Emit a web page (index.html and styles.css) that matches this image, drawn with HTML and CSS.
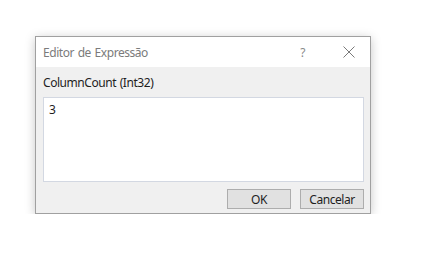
FILE: index.html
```html
<!DOCTYPE html>
<html lang="pt">
<head>
<meta charset="UTF-8">
<title>Editor de Expressão</title>
<link rel="stylesheet" href="styles.css">
</head>
<body>

<!-- ─── DIALOG ──────────────────────────────────────────────────────────── -->
<div class="dialog">
  <div class="titlebar">
    <span class="title">Editor de Expressão</span>
    <span class="help">?</span>
    <svg class="close" width="12" height="12" viewBox="0 0 12 12">
      <path d="M0.5 0.5 L11.5 11.5 M11.5 0.5 L0.5 11.5" stroke="#7a7a7a" stroke-width="1" fill="none"/>
    </svg>
  </div>

  <div class="content">
    <div class="label">ColumnCount (Int32)</div>
    <div class="editor">3</div>
    <div class="buttons">
      <button class="btn">OK</button>
      <button class="btn">Cancelar</button>
    </div>
  </div>
</div>

</body>
</html>
```

FILE: styles.css
```css
*{ box-sizing:border-box; }

body{
  margin:0;
  background:#fff;
  font-family:"Noto Sans", "Open Sans", sans-serif;
  font-size:12px;
  letter-spacing:-0.45px;
  word-spacing:1px;
  color:#1e1e1e;
}

/* the dialog window */
.dialog{
  width:336px;
  height:178px;
  margin:36px 0 0 35px;
  border:1px solid #a0a0a0;
  background:#f0f0f0;
  box-shadow:0 2px 10px rgba(0,0,0,.22);
  display:flex;
  flex-direction:column;
}

.titlebar{
  height:30px;
  background:#fff;
  display:flex;
  align-items:center;
  padding:0 15px 0 7px;
}
.title{
  flex:1;
  color:#7b7b7b;
}
.help{
  color:#8a8a8a;
  margin-right:38px;
}
.close{ display:block; }

.content{
  flex:1;
  padding:8px 6px 0 7px;
  display:flex;
  flex-direction:column;
}
.label{
  height:22px;
  line-height:16px;
}
.editor{
  height:85px;
  background:#fff;
  border:1px solid #d3d8e2;
  padding:4px 5px;
  line-height:16px;
}
.buttons{
  display:flex;
  justify-content:flex-end;
  gap:9px;
  margin-top:7px;
}
.btn{
  width:64px;
  height:20px;
  padding:0;
  font:inherit;
  letter-spacing:inherit;
  color:#1e1e1e;
  background:#e1e1e1;
  border:1px solid #adadad;
}
```
